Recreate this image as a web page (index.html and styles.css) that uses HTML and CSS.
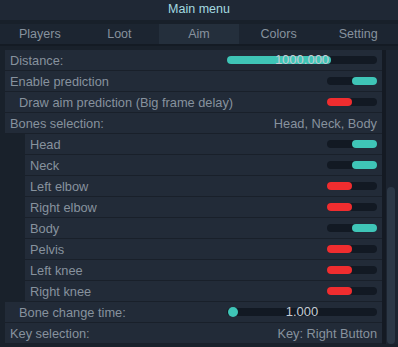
FILE: index.html
```html
<!DOCTYPE html>
<html>
<head>
<meta charset="utf-8">
<link rel="stylesheet" href="styles.css">
</head>
<body>
<div class="win">
  <div class="title">Main menu</div>
  <div class="tabs">
    <div class="tab">Players</div>
    <div class="tab">Loot</div>
    <div class="tab active">Aim</div>
    <div class="tab">Colors</div>
    <div class="tab">Setting</div>
  </div>
  <div class="body">
    <div class="list">
      <div class="row">
        <span class="label">Distance:</span>
        <div class="slider"><div class="fill" style="width:69%"></div><span class="sval">1000.000</span></div>
      </div>
      <div class="row">
        <span class="label">Enable prediction</span>
        <div class="toggle on"><div class="knob"></div></div>
      </div>
      <div class="row ind">
        <span class="label">Draw aim prediction (Big frame delay)</span>
        <div class="toggle off"><div class="knob"></div></div>
      </div>
      <div class="row">
        <span class="label">Bones selection:</span>
        <span class="value">Head, Neck, Body</span>
      </div>
      <div class="row sub"><span class="label">Head</span><div class="toggle on"><div class="knob"></div></div></div>
      <div class="row sub"><span class="label">Neck</span><div class="toggle on"><div class="knob"></div></div></div>
      <div class="row sub"><span class="label">Left elbow</span><div class="toggle off"><div class="knob"></div></div></div>
      <div class="row sub"><span class="label">Right elbow</span><div class="toggle off"><div class="knob"></div></div></div>
      <div class="row sub"><span class="label">Body</span><div class="toggle on"><div class="knob"></div></div></div>
      <div class="row sub"><span class="label">Pelvis</span><div class="toggle off"><div class="knob"></div></div></div>
      <div class="row sub"><span class="label">Left knee</span><div class="toggle off"><div class="knob"></div></div></div>
      <div class="row sub"><span class="label">Right knee</span><div class="toggle off"><div class="knob"></div></div></div>
      <div class="row ind">
        <span class="label">Bone change time:</span>
        <div class="slider"><div class="dot"></div><span class="sval">1.000</span></div>
      </div>
      <div class="row">
        <span class="label">Key selection:</span>
        <span class="value">Key: Right Button</span>
      </div>
    </div>
    <div class="scroll"><div class="thumb"></div></div>
  </div>
</div>
</body>
</html>
```

FILE: styles.css
```css
html, body {
  margin: 0;
  padding: 0;
  background: #1a222c;
}
.win {
  width: 398px;
  height: 347px;
  overflow: hidden;
  font-family: "Liberation Sans", Arial, sans-serif;
  font-size: 12.8px;
  color: #87929e;
  background: #19212b;
}
.title {
  height: 20px;
  line-height: 19px;
  text-align: center;
  background: #1f2835;
  color: #a4dbe0;
  font-size: 12.5px;
  border-bottom: 4px solid #18202a;
}
.tabs {
  display: grid;
  grid-template-columns: repeat(5, 1fr);
  height: 20px;
  background: #1c2531;
  border-bottom: 2px solid #141b24;
  font-size: 12.5px;
}
.tab {
  text-align: center;
  line-height: 20px;
}
.tab.active {
  background: #242f3c;
}
.body {
  display: flex;
  padding-top: 4px;
}
.list {
  width: 377px;
  padding-left: 5px;
}
.row {
  height: 20px;
  border-bottom: 1px solid #19202a;
  background: #222b38;
  display: flex;
  align-items: center;
  justify-content: space-between;
  padding: 0 5px;
}
.row.ind {
  padding-left: 14px;
}
.row.sub {
  margin-left: 20px;
}
.label {
  white-space: nowrap;
}
.value {
  white-space: nowrap;
}
.toggle {
  width: 50px;
  height: 8px;
  border-radius: 4px;
  background: #121923;
  display: flex;
}
.toggle.on {
  justify-content: flex-end;
}
.knob {
  width: 25px;
  height: 8px;
  border-radius: 4px;
}
.toggle.on .knob {
  background: #3fc5b7;
}
.toggle.off .knob {
  background: #f02d2f;
}
.slider {
  position: relative;
  width: 150px;
  height: 8px;
  border-radius: 4px;
  background: #121923;
}
.fill {
  height: 8px;
  border-radius: 4px;
  background: #3fc5b7;
}
.dot {
  position: absolute;
  left: 1px;
  top: -1px;
  width: 10px;
  height: 10px;
  border-radius: 50%;
  background: #3fc5b7;
}
.sval {
  position: absolute;
  left: 0;
  right: 0;
  top: -3px;
  text-align: center;
  line-height: 14px;
  color: #c4ccd4;
  font-size: 13px;
}
.scroll {
  width: 16px;
  background: #1c2430;
  border-left: 4px solid #141a23;
  box-sizing: border-box;
  padding: 137px 3px 0 1px;
}
.thumb {
  height: 157px;
  border-radius: 4px;
  background: #2c3846;
}
```
